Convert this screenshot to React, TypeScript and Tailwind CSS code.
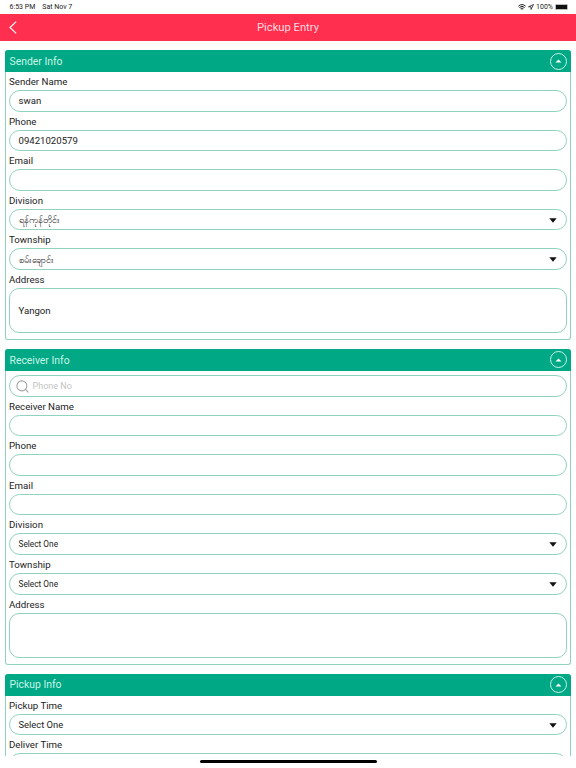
import { Search, Wifi } from 'lucide-react';

const font = "font-['Roboto',_'Noto_Sans',_sans-serif]";

function Label({ text }: { text: string }) {
  return <div className="h-[18px] pt-[3px] text-[9.7px] leading-[13px] text-[#222]">{text}</div>;
}

function Caret() {
  return (
    <svg width="8" height="5" viewBox="0 0 8 5" className="absolute right-[9px] top-[8px]">
      <path d="M0.3 0.3H7.7L4 4.8Z" fill="#111" />
    </svg>
  );
}

function Input({ value, select, size = 'text-[9.6px]' }: { value?: string; select?: boolean; size?: string }) {
  return (
    <div className={`relative flex h-[21.6px] items-center rounded-[11px] border border-[#8fd3bf] pl-[8.5px] pt-[1px] text-[#222] ${size}`}>
      {value}
      {select && <Caret />}
    </div>
  );
}

function Field({ label, value, select, size }: { label: string; value?: string; select?: boolean; size?: string }) {
  return (
    <div>
      <Label text={label} />
      <Input value={value} select={select} size={size} />
    </div>
  );
}

function Address({ value }: { value?: string }) {
  return (
    <div>
      <Label text="Address" />
      <div className="flex h-[45px] items-center rounded-[10px] border border-[#8fd3bf] pl-[8.5px] pt-[1px] text-[9.6px] text-[#222]">
        {value}
      </div>
    </div>
  );
}

function Section({ title, children }: { title: string; children: React.ReactNode }) {
  return (
    <section className="mx-[5px] mb-[9px] rounded-[3px] border border-t-0 border-[#8fd3bf]">
      <div className="-mx-px flex h-[22px] items-center justify-between rounded-t-[3px] bg-[#00a885] pl-[4.5px] pr-[4px] text-[10.4px] text-[#c9f5e8]">
        <span className="pt-[1px]">{title}</span>
        <div className="flex h-[17px] w-[17px] items-center justify-center rounded-full border border-[#c9f5e8]">
          <svg width="7" height="4" viewBox="0 0 7 4">
            <path d="M0.5 3.5L3.5 0.5L6.5 3.5Z" fill="#fff" />
          </svg>
        </div>
      </div>
      <div className="px-[3px] pb-[6px]">{children}</div>
    </section>
  );
}

export default function App() {
  return (
    <div className={`flex h-[768px] w-[576px] flex-col overflow-hidden bg-white ${font}`}>
      {/* Status bar */}
      <div className="flex h-[14px] items-center justify-between pl-[9.5px] pr-[8px] text-[7px] text-[#222]">
        <div className="flex gap-[7px]">
          <span>6:53 PM</span>
          <span>Sat Nov 7</span>
        </div>
        <div className="flex items-center gap-[2px]">
          <Wifi size={8} strokeWidth={3} />
          <svg width="6" height="6" viewBox="0 0 6 6">
            <path d="M5.5 0.5L0.5 2.8H3V5.5Z" fill="none" stroke="#222" strokeWidth="0.8" />
          </svg>
          <span>100%</span>
          <div className="h-[6px] w-[13px] rounded-[1.5px] border border-[#bbb] bg-[#111]" />
        </div>
      </div>

      {/* Nav bar */}
      <div className="relative flex h-[27px] items-center justify-center bg-[#ff304f] pt-[1px] text-[11.2px] text-[#ffd9df]">
        <svg width="8" height="13" viewBox="0 0 8 13" className="absolute left-[9px] top-[7px]">
          <path d="M7.2 0.6L1 6.5L7.2 12.4" fill="none" stroke="#fff" strokeWidth="1.1" />
        </svg>
        Pickup Entry
      </div>

      {/* Form */}
      <div className="min-h-0 flex-1 overflow-hidden pt-[9px]">
        <Section title="Sender Info">
          <Field label="Sender Name" value="swan" />
          <Field label="Phone" value="09421020579" />
          <Field label="Email" />
          <Field label="Division" value="ရန်ကုန်တိုင်း" select size="text-[9.5px]" />
          <Field label="Township" value="စမ်းချောင်း" select size="text-[9.5px]" />
          <Address value="Yangon" />
        </Section>

        <Section title="Receiver Info">
          <div className="mt-[4px] flex h-[21.6px] items-center rounded-[11px] border border-[#8fd3bf] pl-[4.5px] pt-[1px] text-[9px] text-[#c4c4c4]">
            <Search size={15} strokeWidth={1.7} className="mr-[3px] text-[#a3a3a3]" />
            Phone No
          </div>
          <Field label="Receiver Name" />
          <Field label="Phone" />
          <Field label="Email" />
          <Field label="Division" value="Select One" select size="text-[8.3px]" />
          <Field label="Township" value="Select One" select size="text-[8.3px]" />
          <Address />
        </Section>

        <Section title="Pickup Info">
          <Field label="Pickup Time" value="Select One" select size="text-[9.4px]" />
          <Field label="Deliver Time" select />
        </Section>
      </div>

      {/* Home indicator */}
      <div className="flex h-[12px] shrink-0 items-start justify-center pt-[4px]">
        <div className="h-[3px] w-[177px] rounded-full bg-black" />
      </div>
    </div>
  );
}
